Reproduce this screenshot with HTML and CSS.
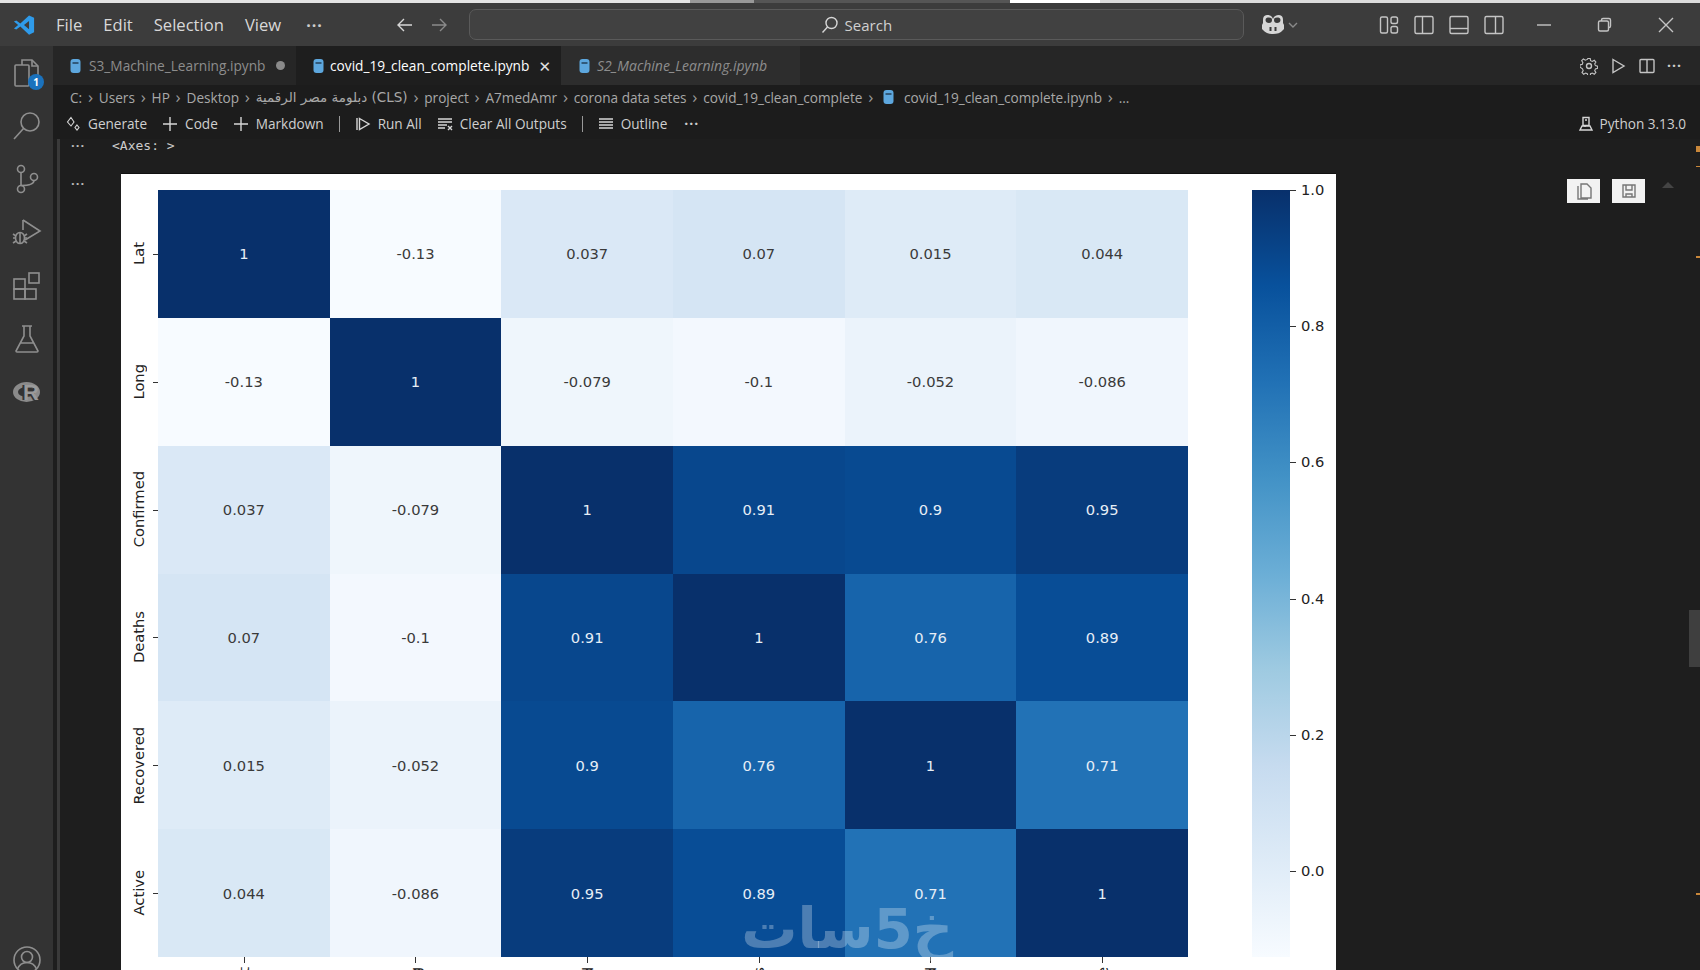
FILE: index.html
```html
<!DOCTYPE html>
<html lang="en">
<head>
<meta charset="utf-8">
<title>covid_19_clean_complete.ipynb</title>
<link rel="stylesheet" href="styles.css">
</head>
<body>
<div class="topstrip"></div>
<header class="titlebar">
  <svg class="logo" viewBox="0 0 24 24"><path fill="#2f9bea" d="M17.5 1.5 23 4v16l-5.5 2.500L8 13.600 3.600 17 1 15.700 5.600 12 1 8.300 3.600 7 8 10.400zM17.500 7.500 12 12l5.500 4.500z"/></svg>
  <nav class="menu"><span>File</span><span>Edit</span><span>Selection</span><span>View</span><span class="dots">···</span></nav>
  <div class="arrows">
    <svg class="ico18" viewBox="0 0 18 18"><path d="M16 9H2M8 3 2 9l6 6" class="s-light"/></svg>
    <svg class="ico18" viewBox="0 0 18 18"><path d="M2 9h14M10 3l6 6-6 6" class="s-dim"/></svg>
  </div>
  <div class="search">
    <svg class="ico18" viewBox="0 0 18 18"><circle cx="10.500" cy="7" r="5.500" class="s-light"/><path d="M6.500 11 1.500 16.500" class="s-light"/></svg>
    <span>Search</span>
  </div>
  <div class="copilot">
    <svg class="copilot-ico" viewBox="0 0 24 24"><path fill="#d6d6d6" d="M12 6c1-3 3-4 6-4 3 .2 4 2 4 5v3l1 2v4l-1 1c-2.500 3-6 4-10 4s-7.500-1-10-4l-1-1v-4l1-2V7c0-3 1-4.800 4-5 3 0 5 1 6 4z"/><path fill="#3b3b3b" d="M8 4.500c-2 0-3.500.4-3.500 2.500 0 2 1.500 3 3.500 3s3-1 3-3c0-1.800-1.200-2.500-3-2.500zm8 0c-1.800 0-3 .7-3 2.500 0 2 1 3 3 3s3.500-1 3.500-3c0-2.100-1.500-2.500-3.500-2.500zM8.500 14v4h2v-4zm5 0v4h2v-4z"/></svg>
    <svg class="chev" viewBox="0 0 10 6"><path d="M1 1l4 4 4-4" class="s-dim"/></svg>
  </div>
  <div class="layouts">
    <svg class="ico22" viewBox="0 0 22 22"><rect x="2.500" y="3" width="7" height="16" rx="1.500" class="s-mid"/><rect x="13" y="3" width="6.500" height="6.500" rx="1.800" class="s-mid"/><rect x="13" y="12.500" width="6.500" height="6.500" rx="1.800" class="s-mid"/></svg>
    <svg class="ico22" viewBox="0 0 22 22"><rect x="2" y="2.500" width="18" height="17" rx="1.500" class="s-mid"/><path d="M9.500 2.500v17" class="s-mid"/></svg>
    <svg class="ico22" viewBox="0 0 22 22"><rect x="2" y="2.500" width="18" height="17" rx="1.500" class="s-mid"/><path d="M2 14.500h18" class="s-mid"/></svg>
    <svg class="ico22" viewBox="0 0 22 22"><rect x="2" y="2.500" width="18" height="17" rx="1.500" class="s-mid"/><path d="M12.500 2.500v17" class="s-mid"/></svg>
  </div>
  <div class="winctl">
    <svg class="ico18" viewBox="0 0 18 18"><path d="M2 9h14" class="s-mid"/></svg>
    <svg class="ico18" viewBox="0 0 18 18"><rect x="2.500" y="5" width="10" height="10" rx="1.500" class="s-mid"/><path d="M5.500 5V4a1.500 1.500 0 0 1 1.500-1.500h6A1.500 1.500 0 0 1 14.500 4v6a1.500 1.500 0 0 1-1.500 1.500h-.5" class="s-mid"/></svg>
    <svg class="ico18" viewBox="0 0 18 18"><path d="M2 2l14 14M16 2 2 16" class="s-mid"/></svg>
  </div>
</header>
<div class="workbench">
  <aside class="activity">
    <div class="act act-files">
      <svg class="ico32" viewBox="0 0 32 32"><path d="M11 8V3h10l6 6v15H18" class="s-act"/><path d="M21 3v6h6" class="s-act"/><rect x="4" y="8" width="14" height="21" rx="1" class="s-act"/></svg>
      <span class="badge">1</span>
    </div>
    <div class="act"><svg class="ico32" viewBox="0 0 32 32"><circle cx="19" cy="12" r="9" class="s-act"/><path d="M12.500 18.500 3 29" class="s-act"/></svg></div>
    <div class="act"><svg class="ico32" viewBox="0 0 32 32"><circle cx="10" cy="6" r="3.500" class="s-act"/><circle cx="10" cy="26" r="3.500" class="s-act"/><circle cx="23" cy="14" r="3.500" class="s-act"/><path d="M10 9.500v13M23 17.500c0 4-6 5-13 5" class="s-act"/></svg></div>
    <div class="act"><svg class="ico32" viewBox="0 0 32 32"><path d="M12 3l17 11-15 9" class="s-act"/><path d="M12 3v10" class="s-act"/><ellipse cx="9" cy="21" rx="4.500" ry="5.500" class="s-act"/><path d="M9 15.500v11M2 17l3 2M2 21h3M2 26l3-2M16 17l-3 2M16 21h-3M16 26l-3-2" class="s-act"/></svg></div>
    <div class="act"><svg class="ico32" viewBox="0 0 32 32"><rect x="3" y="9" width="11" height="10" class="s-act"/><rect x="3" y="19" width="11" height="10" class="s-act"/><rect x="14" y="19" width="11" height="10" class="s-act"/><rect x="18" y="3" width="10" height="10" class="s-act"/></svg></div>
    <div class="act"><svg class="ico32" viewBox="0 0 32 32"><path d="M11 3h10M13 3v10L5 28a1 1 0 0 0 1 1h20a1 1 0 0 0 1-1L19 13V3M9 20h14" class="s-act"/></svg></div>
    <div class="act act-r"><span class="r-ring"></span><span class="r-letter">R</span></div>
    <div class="act-account"><svg class="ico32" viewBox="0 0 32 32"><circle cx="16" cy="16" r="13" class="s-act"/><circle cx="16" cy="13" r="5.500" class="s-act"/><path d="M6.500 25c2-5 5-6.500 9.500-6.500s7.500 1.500 9.500 6.500" class="s-act"/></svg></div>
  </aside>
  <main class="editor">
    <div class="tabs">
      <div class="tab tab-one">
        <svg class="nb" viewBox="0 0 12 14"><rect x="1" y="0" width="10" height="14" rx="3" fill="#5da7de"/><path d="M3 4h6" stroke="#23405a" stroke-width="1.500"/></svg>
        <span>S3_Machine_Learning.ipynb</span><i class="dirty"></i>
      </div>
      <div class="tab tab-active">
        <svg class="nb" viewBox="0 0 12 14"><rect x="1" y="0" width="10" height="14" rx="3" fill="#5da7de"/><path d="M3 4h6" stroke="#23405a" stroke-width="1.500"/></svg>
        <span>covid_19_clean_complete.ipynb</span><b class="close">✕</b>
      </div>
      <div class="tab tab-preview">
        <svg class="nb" viewBox="0 0 12 14"><rect x="1" y="0" width="10" height="14" rx="3" fill="#5da7de"/><path d="M3 4h6" stroke="#23405a" stroke-width="1.500"/></svg>
        <span>S2_Machine_Learning.ipynb</span>
      </div>
      <div class="tab-actions">
        <svg class="ico18" viewBox="0 0 18 18"><circle cx="9" cy="9" r="2.500" class="s-mid"/><path d="M7.800 1.500h2.400l.4 2.200 1.700.8 2-1.200 1.600 1.700-1.200 1.900.7 1.700 2.200.5v2.300l-2.200.5-.7 1.700 1.200 1.900-1.600 1.700-2-1.200-1.700.7-.4 2.200H7.800l-.5-2.200-1.700-.7-1.900 1.200-1.700-1.700 1.200-1.900-.7-1.700L0 10.200V7.800l2.200-.4.700-1.800L1.700 3.700l1.700-1.700 1.900 1.200 2-.8z" class="s-mid thin"/></svg>
        <svg class="ico18" viewBox="0 0 18 18"><path d="M4 2.500 15 9 4 15.500z" class="s-mid"/></svg>
        <svg class="ico18" viewBox="0 0 18 18"><rect x="2" y="2.500" width="14" height="13" rx="1" class="s-mid"/><path d="M9 2.500v13" class="s-mid"/></svg>
        <span class="dots small">···</span>
      </div>
    </div>
    <div class="crumbs">
      <span>C:</span><u>›</u><span>Users</span><u>›</u><span>HP</span><u>›</u><span>Desktop</span><u>›</u><span class="ar">دبلومة مصر الرقمية (CLS)</span><u>›</u><span>project</span><u>›</u><span>A7medAmr</span><u>›</u><span>corona data setes</span><u>›</u><span>covid_19_clean_complete</span><u>›</u>
      <svg class="nb nb-crumb" viewBox="0 0 12 14"><rect x="1" y="0" width="10" height="14" rx="3" fill="#5da7de"/><path d="M3 4h6" stroke="#23405a" stroke-width="1.500"/></svg>
      <span>covid_19_clean_complete.ipynb</span><u>›</u><span>...</span>
    </div>
    <div class="toolbar">
      <span class="tool"><svg class="ico16" viewBox="0 0 16 16"><path d="M6 1.500l3 4.500-3 4-3.500-4zM12 9l2 2.500L12 14l-2-2.500z" class="s-light thin"/></svg>Generate</span>
      <span class="tool"><svg class="ico16" viewBox="0 0 16 16"><path d="M8 1v14M1 8h14" class="s-light"/></svg>Code</span>
      <span class="tool"><svg class="ico16" viewBox="0 0 16 16"><path d="M8 1v14M1 8h14" class="s-light"/></svg>Markdown</span>
      <i class="tsep"></i>
      <span class="tool"><svg class="ico16" viewBox="0 0 16 16"><path d="M2 2v12M4.500 2.500 14 8l-9.500 5.500z" class="s-light"/></svg>Run All</span>
      <span class="tool"><svg class="ico16" viewBox="0 0 16 16"><path d="M1 3h14M1 6h14M1 9h9M1 12h7M11 10l4 4M15 10l-4 4" class="s-light"/></svg>Clear All Outputs</span>
      <i class="tsep"></i>
      <span class="tool"><svg class="ico16" viewBox="0 0 16 16"><path d="M1 3h14M1 6h14M1 9h14M1 12h14" class="s-light"/></svg>Outline</span>
      <span class="dots small tool-more">···</span>
      <span class="kernel"><svg class="ico16" viewBox="0 0 16 16"><path d="M5 1.500h6v8H5zM4 10h8l2 4H2zM7 4h2M7 10v1" class="s-light"/></svg>Python 3.13.0</span>
    </div>
    <div class="notebook">
      <div class="cellrow axes-row"><span class="cellmore">···</span><code class="axes">&lt;Axes: &gt;</code></div>
      <div class="cellrow fig-row">
        <span class="cellmore fig-more">···</span>
        <figure class="figure">
          <div class="ylabels">
            <span><em>Lat</em></span><span><em>Long</em></span><span><em>Confirmed</em></span><span><em>Deaths</em></span><span><em>Recovered</em></span><span><em>Active</em></span>
          </div>
          <div class="plot">
            <div class="heat">
              <div class="c v100">1</div><div class="c vn13">-0.13</div><div class="c v037">0.037</div><div class="c v07">0.07</div><div class="c v015">0.015</div><div class="c v044">0.044</div>
              <div class="c vn13">-0.13</div><div class="c v100">1</div><div class="c vn079">-0.079</div><div class="c vn10">-0.1</div><div class="c vn052">-0.052</div><div class="c vn086">-0.086</div>
              <div class="c v037">0.037</div><div class="c vn079">-0.079</div><div class="c v100">1</div><div class="c v91">0.91</div><div class="c v90">0.9</div><div class="c v95">0.95</div>
              <div class="c v07">0.07</div><div class="c vn10">-0.1</div><div class="c v91">0.91</div><div class="c v100">1</div><div class="c v76">0.76</div><div class="c v89">0.89</div>
              <div class="c v015">0.015</div><div class="c vn052">-0.052</div><div class="c v90">0.9</div><div class="c v76">0.76</div><div class="c v100">1</div><div class="c v71">0.71</div>
              <div class="c v044">0.044</div><div class="c vn086">-0.086</div><div class="c v95">0.95</div><div class="c v89">0.89</div><div class="c v71">0.71</div><div class="c v100">1</div>
            </div>
            <div class="xlabels">
              <span><em>Lat</em></span><span><em>Long</em></span><span><em>Confirmed</em></span><span><em>Deaths</em></span><span><em>Recovered</em></span><span><em>Active</em></span>
            </div>
            <div class="watermark" dir="rtl">خ5سات</div>
          </div>
          <div class="cbar">
            <div class="cbar-grad"></div>
            <div class="cbar-ticks">
              <span>1.0</span><span>0.8</span><span>0.6</span><span>0.4</span><span>0.2</span><span>0.0</span>
            </div>
          </div>
        </figure>
        <div class="output-actions">
          <span class="outbtn"><svg class="ico18" viewBox="0 0 18 18"><path d="M6 2h6l4 4v10H6zM3 4v13h10" class="s-btn"/></svg></span>
          <span class="outbtn"><svg class="ico18" viewBox="0 0 18 18"><path d="M3 3h12v12H3zM6 3v5h6V3M6 15v-3h6v3" class="s-btn"/></svg></span>
          <i class="caret"></i>
        </div>
      </div>
      <div class="gutter-line"></div>
      <div class="scroll-thumb"></div>
      <i class="ruler r1"></i><i class="ruler r2"></i><i class="ruler r3"></i><i class="ruler r4"></i>
    </div>
  </main>
</div>
</body>
</html>
```
FILE: styles.css
```css
* { box-sizing: border-box; }
html, body { margin: 0; height: 100%; overflow: hidden; }
body { width: 1700px; height: 970px; background: #1e1e1e; font-family: "Open Sans", "Noto Sans", "DejaVu Sans", sans-serif; color: #ccc; display: flex; flex-direction: column; }
svg { display: block; flex: none; }
.s-light, .s-dim, .s-mid, .s-act, .s-btn { fill: none; stroke-width: 1.400; }
.s-light { stroke: #d6d6d6; }
.s-dim { stroke: #8a8a8a; }
.s-mid { stroke: #c4c4c4; }
.s-act { stroke: #8f8f8f; stroke-width: 1.600; }
.s-btn { stroke: #777; }
.thin { stroke-width: 1.100; }
.ico16 { width: 16px; height: 16px; }
.ico18 { width: 18px; height: 18px; }
.ico22 { width: 22px; height: 22px; }
.ico32 { width: 32px; height: 32px; }

.topstrip { height: 3px; flex: none; background: linear-gradient(to right, #e4e4e4 0, #e4e4e4 690px, #999 690px, #999 754px, #555 754px, #555 1010px, #fff 1010px, #fff 1100px, #dcdcdc 1100px); }
.titlebar { height: 43px; background: #3c3c3c; display: flex; align-items: center; flex: none; position: relative; }
.logo { width: 22px; height: 22px; margin-left: 13px; }
.menu { display: flex; align-items: center; margin-left: 21px; font-size: 16.600px; color: #d8d8d8; gap: 21px; }
.dots { letter-spacing: 1px; font-weight: 700; font-size: 16px; color: #ccc; }
.menu .dots { margin-left: 4px; }
.arrows { display: flex; gap: 16px; margin-left: 73px; }
.search { width: 775px; height: 31px; margin-left: 21px; border: 1px solid #5a5a5a; border-radius: 7px; background: #414141; display: flex; align-items: center; justify-content: center; gap: 6px; font-size: 15px; color: #d0d0d0; }
.copilot { display: flex; align-items: center; gap: 3px; margin-left: 17px; }
.copilot-ico { width: 24px; height: 24px; }
.chev { width: 10px; height: 6px; }
.layouts { display: flex; gap: 13px; margin-left: 80px; }
.winctl { display: flex; gap: 43px; margin-left: 30px; }

.workbench { flex: 1; display: flex; min-height: 0; }
.activity { width: 53px; background: #333; display: flex; flex-direction: column; align-items: center; flex: none; position: relative; }
.act { height: 53.300px; display: flex; align-items: center; justify-content: center; position: relative; width: 100%; flex: none; }
.badge { position: absolute; left: 28px; top: 28px; width: 16px; height: 16px; border-radius: 50%; background: #1b72bd; color: #fff; font-size: 10px; font-weight: 700; display: flex; align-items: center; justify-content: center; }
.r-ring { width: 27px; height: 20px; border: 5px solid #8a8a8a; border-radius: 50%; }
.r-letter { position: absolute; left: 23px; top: 15px; font: 700 22px/24px "Liberation Sans", sans-serif; color: #9a9a9a; text-shadow: -2px 0 0 #333; }
.act-account { margin-top: auto; margin-bottom: -6px; }
.editor { flex: 1; min-width: 0; display: flex; flex-direction: column; background: #1e1e1e; }

.tabs { height: 39px; background: #262626; display: flex; align-items: stretch; flex: none; }
.tab { display: flex; align-items: center; font-size: 13.700px; color: #8d8d8d; white-space: nowrap; }
.tab .nb { margin-right: 7px; }
.nb { width: 13px; height: 14px; }
.tab-one { width: 243px; padding-left: 16px; }
.dirty { width: 9px; height: 9px; border-radius: 50%; background: #8a8a8a; margin-left: 11px; }
.tab-active { width: 265px; background: #1e1e1e; color: #fff; padding-left: 16px; }
.tab-active .nb { margin-right: 5px; }
.close { font-size: 15px; margin-left: 9px; font-weight: 400; color: #e0e0e0; }
.tab-preview { width: 239px; background: #2d2d2d; font-style: italic; font-size: 14px; padding-left: 17px; }
.tab-preview .nb { margin-right: 6px; }
.tab-actions { margin-left: auto; display: flex; align-items: center; gap: 11px; padding-right: 18px; }
.small { font-size: 14px; }

.crumbs { height: 24px; display: flex; align-items: center; padding-left: 17px; font-size: 13.600px; color: #a8a8a8; flex: none; gap: 5.800px; white-space: nowrap; background: #1c1c1c; }
.crumbs u { text-decoration: none; font-size: 17px; line-height: 20px; color: #9a9a9a; }
.ar { font-family: "DejaVu Sans", sans-serif; font-size: 13.500px; }
.nb-crumb { margin: 0 3px; }

.toolbar { height: 30px; display: flex; align-items: center; padding: 0 0 1px 12px; font-size: 13.600px; color: #cfcfcf; flex: none; gap: 15px; background: #1c1c1c; }
.tool { display: flex; align-items: center; gap: 7px; white-space: nowrap; }
.tool-more { margin-left: 2px; }
.tsep { width: 1px; height: 16px; background: #999; }
.kernel { margin-left: auto; display: flex; align-items: center; gap: 6px; padding-right: 14px; color: #cfcfcf; }

.notebook { flex: 1; position: relative; min-height: 0; overflow: hidden; }
.cellrow { display: flex; }
.axes-row { height: 37px; align-items: flex-start; padding-left: 18px; color: #ccc; margin-top: -3px; }
.cellmore { font-size: 13px; font-weight: 700; letter-spacing: 1px; color: #bbb; width: 16px; flex: none; }
.fig-more { margin-top: 1px; }
.axes { font: 13px "DejaVu Sans Mono", monospace; margin-left: 25px; margin-top: 2px; color: #ccc; }
.fig-row { padding-left: 18px; align-items: flex-start; }
.figure { margin: 0 0 0 34px; width: 1215px; height: 800px; background: #fff; display: flex; border-top: 1px solid #111; padding-top: 16px; font-family: "DejaVu Sans", sans-serif; color: #222; flex: none; }
.ylabels { width: 37px; height: 767px; display: grid; grid-template-rows: repeat(6, 1fr); font-size: 14.700px; flex: none; }
.ylabels span { display: flex; align-items: center; padding-left: 9px; position: relative; }
.ylabels span::after { content: ""; position: absolute; right: 0; top: 50%; width: 5px; height: 1px; background: #333; }
.ylabels em, .xlabels em { font-style: normal; white-space: nowrap; writing-mode: vertical-rl; transform: rotate(180deg); line-height: 17px; }
.plot { width: 1030px; position: relative; flex: none; }
.heat { width: 1030px; height: 767px; display: grid; grid-template-columns: repeat(6, 1fr); grid-template-rows: repeat(6, 1fr); font-size: 14.700px; }
.c { display: flex; align-items: center; justify-content: center; }
.v100 { background: #08306b; color: #e6eef6; }
.v95 { background: #083c7d; color: #e6eef6; }
.v91 { background: #08478d; color: #e6eef6; }
.v90 { background: #084a91; color: #e6eef6; }
.v89 { background: #084d96; color: #e6eef6; }
.v76 { background: #1764ab; color: #e6eef6; }
.v71 { background: #2272b6; color: #e6eef6; }
.v07 { background: #d5e5f4; color: #3a3a3a; }
.v044 { background: #d9e8f5; color: #3a3a3a; }
.v037 { background: #dae8f6; color: #3a3a3a; }
.v015 { background: #deebf7; color: #3a3a3a; }
.vn052 { background: #ebf3fb; color: #3a3a3a; }
.vn079 { background: #eff6fc; color: #3a3a3a; }
.vn086 { background: #f0f6fd; color: #3a3a3a; }
.vn10 { background: #f3f8fe; color: #3a3a3a; }
.vn13 { background: #f7fbff; color: #3a3a3a; }
.xlabels { display: grid; grid-template-columns: repeat(6, 1fr); height: 30px; font-size: 14.700px; }
.xlabels span { position: relative; display: flex; justify-content: center; align-items: flex-start; padding-top: 10px; }
.xlabels span::before { content: ""; position: absolute; left: 50%; top: 0; width: 1px; height: 6px; background: #333; }
.watermark { position: absolute; left: 589px; top: 697px; width: 206px; text-align: center; font-size: 56px; font-weight: 700; line-height: 84px; color: rgba(255, 255, 255, 0.28); white-space: nowrap; }
.cbar { display: flex; margin-left: 64px; flex: none; height: 767px; }
.cbar-grad { width: 38px; height: 767px; background: linear-gradient(to bottom, #08306b 0%, #08519c 12.500%, #2171b5 25%, #4292c6 37.500%, #6baed6 50%, #9ecae1 62.500%, #c6dbef 75%, #deebf7 87.500%, #f7fbff 100%); }
.cbar-ticks { position: relative; width: 40px; font-size: 14.700px; height: 699px; display: flex; flex-direction: column; justify-content: space-between; margin-top: -9px; }
.cbar-ticks span { display: block; line-height: 18px; padding-left: 11px; position: relative; }
.cbar-ticks span::before { content: ""; position: absolute; left: 0; top: 9px; width: 6px; height: 1px; background: #333; }

.output-actions { display: flex; align-items: flex-start; gap: 12px; margin-left: 231px; padding-top: 6px; flex: none; }
.outbtn { width: 33px; height: 24px; background: #f2f2f2; display: flex; align-items: center; justify-content: center; }
.caret { width: 0; height: 0; border: 6px solid transparent; border-top: 0; border-bottom: 6px solid #444; margin-top: 3px; margin-left: 5px; }

.gutter-line { position: absolute; left: 4px; top: 0; bottom: 0; width: 3px; background: #3a3a3a; }
.scroll-thumb { position: absolute; right: 0; top: 471px; width: 11px; height: 57px; background: #3f3f3f; }
.ruler { position: absolute; right: 0; width: 4px; background: #c9873a; }
.r1 { top: 7px; height: 6px; }
.r2 { top: 27px; height: 1px; }
.r3 { top: 117px; height: 2px; }
.r4 { top: 754px; height: 2px; }
```
